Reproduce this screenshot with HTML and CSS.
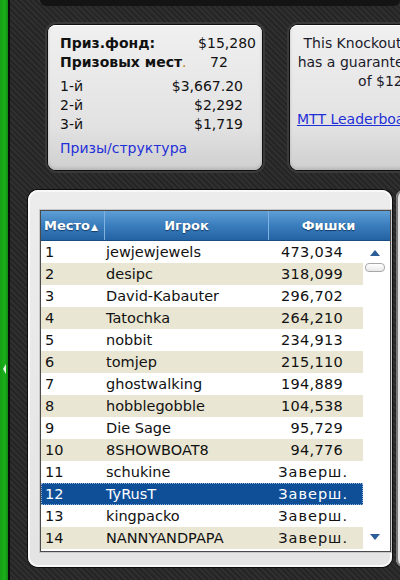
FILE: index.html
```html
<html>

<head>
    <meta charset="utf-8">
    <link rel="stylesheet" href="styles.css">
</head>

<body>
    <div class="app">
        <div class="rail"><span class="rail-tab"></span></div>
        <div class="main">
            <div class="topbar"></div>
            <div class="cards">
                <div class="card prize">
                    <div class="pool">
                        <div class="pool-row"><b>Приз.фонд:</b><span>$15,280</span></div>
                        <div class="pool-row"><b>Призовых мест<i class="dot">.</i></b><span class="places">72</span></div>
                    </div>
                    <div class="payouts">
                        <div class="pay-row"><span>1-й</span><span>$3,667.20</span></div>
                        <div class="pay-row"><span>2-й</span><span>$2,292</span></div>
                        <div class="pay-row"><span>3-й</span><span>$1,719</span></div>
                    </div>
                    <a class="link-blue" href="#">Призы/структура</a>
                </div>
                <div class="card info">
                    <div class="info-text">This Knockout tournament<br>has a guaranteed prize pool<br>of $12,000</div>
                    <a class="link-board" href="#">MTT Leaderboard</a>
                </div>
            </div>
            <div class="lower">
                <div class="board">
                    <div class="grid">
                        <div class="grid-head">
                            <div class="col-place">Место<span class="sort">▲</span></div>
                            <div class="col-name">Игрок</div>
                            <div class="col-chips">Фишки</div>
                        </div>
                        <div class="grid-body">
                            <div class="rows" id="rows"></div>
                            <div class="scroll">
                                <span class="arrow-up"></span>
                                <span class="thumb"></span>
                                <span class="arrow-down"></span>
                            </div>
                        </div>
                    </div>
                </div>
                <div class="board-next"></div>
            </div>
        </div>
    </div>

    <script>
        var players = [
            ['1', 'jewjewjewels', '473,034'],
            ['2', 'desipc', '318,099'],
            ['3', 'David-Kabauter', '296,702'],
            ['4', 'Tatochka', '264,210'],
            ['5', 'nobbit', '234,913'],
            ['6', 'tomjep', '215,110'],
            ['7', 'ghostwalking', '194,889'],
            ['8', 'hobblegobble', '104,538'],
            ['9', 'Die Sage', '95,729'],
            ['10', '8SHOWBOAT8', '94,776'],
            ['11', 'schukine', 'Заверш.'],
            ['12', 'TyRusT', 'Заверш.'],
            ['13', 'kingpacko', 'Заверш.'],
            ['14', 'NANNYANDPAPA', 'Заверш.']
        ];

        var rowsDiv = document.getElementById("rows");
        for (var i = 0; i < players.length; i++) {
            var row = document.createElement("div");
            row.className = "row";
            if (i % 2 == 1) {
                row.className += " alt";
            }
            if (players[i][1] == 'TyRusT') {
                row.className += " selected";
            }
            var cells = ['col-place', 'col-name', 'col-chips'];
            for (var c = 0; c < 3; c++) {
                var cell = document.createElement("div");
                cell.className = cells[c];
                if (c == 2 && players[i][2] == 'Заверш.') {
                    cell.className += " done";
                }
                cell.textContent = players[i][c];
                row.appendChild(cell);
            }
            rowsDiv.appendChild(row);
        }
    </script>
</body>

</html>
```

FILE: styles.css
```css
body {
    margin: 0;
    width: 400px;
    height: 580px;
    overflow: hidden;
    font-family: 'DejaVu Sans', sans-serif;
    font-size: 14px;
    background-color: #2a2a2a;
    background-image: repeating-linear-gradient(45deg, #2f2f2f 0 2px, #252525 2px 4px);
}

.app {
    display: flex;
    height: 580px;
}

.rail {
    width: 8px;
    border-right: 2px solid #0b0b0b;
    background: linear-gradient(90deg, #14a014, #1cb01c 60%, #118a11);
    position: relative;
}

.rail-tab {
    position: absolute;
    left: 3px;
    top: 364px;
    width: 0;
    height: 0;
    border-top: 5px solid transparent;
    border-bottom: 5px solid transparent;
    border-right: 3px solid #e8f8e8;
}

.main {
    flex: 1;
    overflow: hidden;
}

.topbar {
    height: 6px;
    margin-left: 30px;
    background: #141414;
    border-radius: 0 0 8px 8px;
}

.cards {
    display: flex;
    gap: 28px;
    margin-top: 19px;
    margin-left: 38px;
}

.card {
    flex: none;
    height: 145px;
    box-sizing: border-box;
    border-radius: 8px;
    background: linear-gradient(#f0f0f0, #e2e2e2 70%, #cfcfcf);
    box-shadow: 0 0 0 1px #101010, 0 0 0 3px #3a3a3a, inset 0 1px 0 #ffffff, inset 0 -2px 3px #b8b8b8;
    color: #111;
}

.prize {
    width: 214px;
    padding: 9px 6px 0 12px;
}

.pool-row {
    display: flex;
    justify-content: space-between;
    line-height: 19px;
}

.dot {
    font-style: normal;
    color: #c08020;
    font-weight: normal;
}

.places {
    width: 46px;
}

.payouts {
    margin-top: 5px;
    padding-right: 13px;
}

.pay-row {
    display: flex;
    justify-content: space-between;
    line-height: 19px;
}

.link-blue {
    display: block;
    margin-top: 5px;
    line-height: 19px;
    color: #1f2fd8;
    text-decoration: none;
}

.info {
    width: 212px;
    padding: 9px 7px 0 7px;
}

.info-text {
    text-align: center;
    line-height: 19px;
    white-space: nowrap;
    color: #1a1a2a;
}

.link-board {
    display: block;
    margin-top: 19px;
    line-height: 19px;
    color: #1f2fd8;
    white-space: nowrap;
}

.lower {
    display: flex;
    gap: 4px;
    margin-top: 20px;
    margin-left: 18px;
}

.board {
    flex: none;
    width: 364px;
    height: 377px;
    box-sizing: border-box;
    padding: 20px 3px 0 12px;
    border-radius: 10px;
    background: linear-gradient(#ececec, #e4e4e4);
    box-shadow: 0 0 0 1px #0e0e0e, inset 0 0 0 2px #f8f8f8;
}

.board-next {
    flex: none;
    width: 20px;
    height: 377px;
    border-radius: 8px 0 0 8px;
    background: #e6e6e6;
    box-shadow: inset 2px 0 0 #7a7a7a;
}

.grid {
    width: 349px;
    border: 1px solid #4a4a4a;
    box-shadow: 0 0 0 1px #c8c8c8;
    background: #ffffff;
}

.grid-head {
    display: flex;
    height: 29px;
    align-items: center;
    background: linear-gradient(#5e9fd6, #3a7dbd 50%, #2463a3);
    color: #ffffff;
    font-weight: bold;
    font-size: 13px;
    text-shadow: 0 1px 1px #123a66;
    border-bottom: 1px solid #1a4c80;
}

.grid-head > div {
    height: 29px;
    line-height: 29px;
    box-sizing: border-box;
}

.grid-head .col-place {
    width: 64px;
    padding-left: 3px;
    border-right: 1px solid #7fb2e0;
}

.sort {
    font-size: 9px;
    margin-left: 1px;
}

.grid-head .col-name {
    width: 164px;
    text-align: center;
    border-right: 1px solid #7fb2e0;
}

.grid-head .col-chips {
    width: 119px;
    text-align: center;
}

.grid-body {
    display: flex;
}

.rows {
    width: 322px;
    padding-bottom: 2px;
}

.row {
    display: flex;
    height: 22px;
    line-height: 22px;
    font-size: 14.5px;
    color: #111;
}

.row.alt {
    background: #e9e6d3;
}

.row.selected {
    background: #0f4f98;
    color: #ffffff;
    outline: 1px dotted #8fb0d8;
    outline-offset: -1px;
}

.row .col-place {
    width: 64px;
    padding-left: 4px;
    box-sizing: border-box;
}

.row .col-name {
    width: 164px;
    padding-left: 1px;
    box-sizing: border-box;
}

.row .col-chips {
    width: 94px;
    padding-right: 20px;
    box-sizing: border-box;
    text-align: right;
    letter-spacing: 0.3px;
}

.row .col-chips.done {
    padding-right: 15px;
    letter-spacing: 1px;
}

.scroll {
    width: 25px;
    position: relative;
    background: #ffffff;
}

.arrow-up {
    position: absolute;
    left: 7px;
    top: 9px;
    border-left: 5px solid transparent;
    border-right: 5px solid transparent;
    border-bottom: 6px solid #2b5d98;
}

.thumb {
    position: absolute;
    left: 2px;
    top: 22px;
    width: 20px;
    height: 9px;
    box-sizing: border-box;
    border: 1px solid #a8a8a8;
    border-radius: 4px;
    background: linear-gradient(#ffffff, #e8e8e8);
}

.arrow-down {
    position: absolute;
    left: 7px;
    bottom: 11px;
    border-left: 5px solid transparent;
    border-right: 5px solid transparent;
    border-top: 6px solid #2b5d98;
}
```
